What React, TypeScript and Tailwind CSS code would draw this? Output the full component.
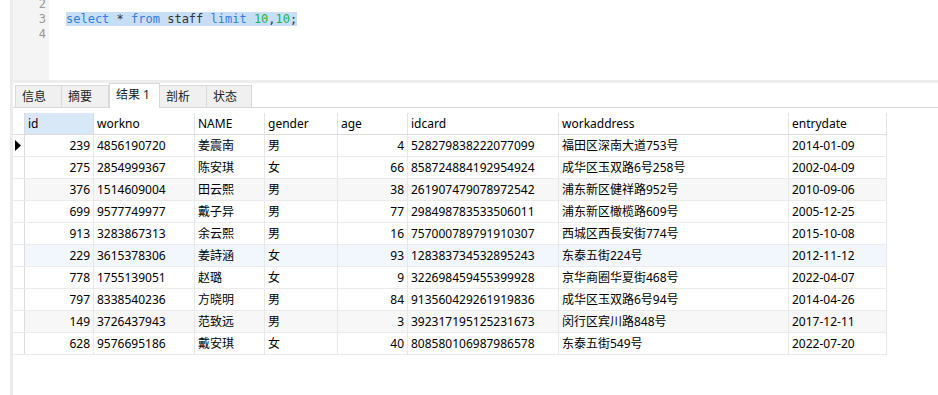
import React from "react"

interface Staff {
    id: number
    workno: string
    name: string
    gender: string
    age: number
    idcard: string
    workaddress: string
    entrydate: string
}

const rows: Staff[] = [
    { id: 239, workno: "4856190720", name: "姜震南", gender: "男", age: 4, idcard: "528279838222077099", workaddress: "福田区深南大道753号", entrydate: "2014-01-09" },
    { id: 275, workno: "2854999367", name: "陈安琪", gender: "女", age: 66, idcard: "858724884192954924", workaddress: "成华区玉双路6号258号", entrydate: "2002-04-09" },
    { id: 376, workno: "1514609004", name: "田云熙", gender: "男", age: 38, idcard: "261907479078972542", workaddress: "浦东新区健祥路952号", entrydate: "2010-09-06" },
    { id: 699, workno: "9577749977", name: "戴子异", gender: "男", age: 77, idcard: "298498783533506011", workaddress: "浦东新区橄榄路609号", entrydate: "2005-12-25" },
    { id: 913, workno: "3283867313", name: "余云熙", gender: "男", age: 16, idcard: "757000789791910307", workaddress: "西城区西長安街774号", entrydate: "2015-10-08" },
    { id: 229, workno: "3615378306", name: "姜詩涵", gender: "女", age: 93, idcard: "128383734532895243", workaddress: "东泰五街224号", entrydate: "2012-11-12" },
    { id: 778, workno: "1755139051", name: "赵璐", gender: "女", age: 9, idcard: "322698459455399928", workaddress: "京华商圈华夏街468号", entrydate: "2022-04-07" },
    { id: 797, workno: "8338540236", name: "方晓明", gender: "男", age: 84, idcard: "913560429261919836", workaddress: "成华区玉双路6号94号", entrydate: "2014-04-26" },
    { id: 149, workno: "3726437943", name: "范致远", gender: "男", age: 3, idcard: "392317195125231673", workaddress: "闵行区宾川路848号", entrydate: "2017-12-11" },
    { id: 628, workno: "9576695186", name: "戴安琪", gender: "女", age: 40, idcard: "808580106987986578", workaddress: "东泰五街549号", entrydate: "2022-07-20" },
]

const tabs = ["信息", "摘要", "结果 1", "剖析", "状态"]
const tabWidths = ["w-[47px]", "w-[47px]", "w-[51px]", "w-[47px]", "w-[45px]"]

function rowBg(i: number) {
    if (i === 5) return "bg-[#f2f7fd]"
    if (i % 3 === 2) return "bg-[#f7f7f7]"
    return "bg-white"
}

export default function App() {
    return (
        <div className="w-[938px] h-[395px] overflow-hidden bg-white flex text-black" style={{ fontFamily: '"Noto Sans", "Noto Sans CJK SC", sans-serif' }}>
            <div className="w-[10px] shrink-0" />
            <div className="flex-1 flex flex-col border-l-[3px] border-[#ececec]">
                {/* editor, scrolled so line 1 is out of view */}
                <div className="h-[80px] flex shrink-0">
                    <div className="w-[36px] bg-[#f4f4f4] font-['DejaVu_Sans_Mono',monospace] text-[12px] leading-[15px] text-[#999] text-right pr-[3px] pt-[1px]">
                        <div className="-mt-[4px]">2</div>
                        <div>3</div>
                        <div>4</div>
                    </div>
                    <div className="flex-1 pl-[17px] font-['DejaVu_Sans_Mono',monospace] text-[12px] leading-[15px] pt-[12px]">
                        <span className="bg-[#c8def7] text-[#333]">
                            <span className="text-[#2f80de]">select</span> * <span className="text-[#2f80de]">from</span> staff <span className="text-[#2f80de]">limit</span> <span className="text-[#1db14b]">10</span>,<span className="text-[#1db14b]">10</span>;
                        </span>
                    </div>
                </div>
                <div className="h-[3px] bg-[#ededed] shrink-0" />

                {/* tabs */}
                <div className="h-[25px] flex items-end pl-[2px] border-b border-[#d9d9d9] shrink-0 text-[12px]">
                    {tabs.map((t, i) => (
                        <div
                            key={t}
                            className={
                                i === 2
                                    ? `${tabWidths[i]} h-[25px] -mb-px bg-white border border-b-0 border-[#d9d9d9] pl-[6px] pt-[2px] text-[#222]`
                                    : `${tabWidths[i]} h-[22px] bg-[#f0f0f0] border border-l-0 first:border-l border-b-0 border-[#d9d9d9] pl-[6px] pt-[2px] text-[#222]`
                            }
                        >
                            {t}
                        </div>
                    ))}
                </div>

                {/* grid */}
                <div className="mt-[5px] text-[12px] leading-[21px] w-max">
                    <div className="flex h-[22px] border-b border-[#dcdcdc]">
                        <div className="w-[12px] border-r border-[#dcdcdc]" />
                        <div className="w-[69px] pl-[3px] bg-[#d9e8f6] border-r border-[#dcdcdc]">id</div>
                        <div className="w-[101px] pl-[3px] border-r border-[#e3e3e3]">workno</div>
                        <div className="w-[70px] pl-[3px] border-r border-[#e3e3e3]">NAME</div>
                        <div className="w-[73px] pl-[3px] border-r border-[#e3e3e3]">gender</div>
                        <div className="w-[70px] pl-[3px] border-r border-[#e3e3e3]">age</div>
                        <div className="w-[151px] pl-[3px] border-r border-[#e3e3e3]">idcard</div>
                        <div className="w-[230px] pl-[3px] border-r border-[#e3e3e3]">workaddress</div>
                        <div className="w-[98px] pl-[3px] border-r border-[#e3e3e3]">entrydate</div>
                    </div>
                    {rows.map((r, i) => (
                        <div key={r.id} className={`flex h-[22px] border-b border-[#ebebeb] ${rowBg(i)}`}>
                            <div className="w-[12px] bg-white border-r border-[#dcdcdc] flex items-center pl-[2px]">
                                {i === 0 && (
                                    <svg width="6" height="11" viewBox="0 0 6 11">
                                        <path d="M0 0 L6 5.5 L0 11 Z" fill="#000" />
                                    </svg>
                                )}
                            </div>
                            <div className="w-[69px] pr-[3px] text-right border-r border-[#e8e8e8]">{r.id}</div>
                            <div className="w-[101px] pl-[3px] border-r border-[#e8e8e8]">{r.workno}</div>
                            <div className="w-[70px] pl-[3px] border-r border-[#e8e8e8]">{r.name}</div>
                            <div className="w-[73px] pl-[3px] border-r border-[#e8e8e8]">{r.gender}</div>
                            <div className="w-[70px] pr-[3px] text-right border-r border-[#e8e8e8]">{r.age}</div>
                            <div className="w-[151px] pl-[3px] border-r border-[#e8e8e8]">{r.idcard}</div>
                            <div className="w-[230px] pl-[3px] border-r border-[#e8e8e8]">{r.workaddress}</div>
                            <div className="w-[98px] pl-[3px] border-r border-[#e8e8e8]">{r.entrydate}</div>
                        </div>
                    ))}
                </div>
            </div>
        </div>
    )
}
